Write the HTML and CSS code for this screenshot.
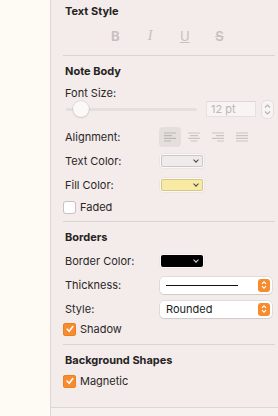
FILE: index.html
```html
<!DOCTYPE html>
<html lang="en">
  <head>
    <meta charset="UTF-8" />
    <meta name="viewport" content="width=device-width, initial-scale=1.0" />
    <title>Inspector</title>
    <link rel="stylesheet" href="styles.css">
  </head>
  <body>
    <div class="canvas"></div>

    <aside class="inspector">
      <!-- Text style -->
      <section class="group top">
        <h2 class="heading">Text Style</h2>
        <div class="style-buttons">
          <span class="sb sb-bold">B</span>
          <span class="sb sb-italic">I</span>
          <span class="sb sb-under">U</span>
          <span class="sb sb-strike">S</span>
        </div>
      </section>
      <hr class="divider first">

      <!-- Note body -->
      <section class="group">
        <h2 class="heading">Note Body</h2>
        <div class="row label-only"><span class="label">Font Size:</span></div>
        <div class="slider-row">
          <div class="track"><span class="thumb"></span></div>
          <div class="field">12 pt</div>
          <div class="stepper">
            <svg width="9" height="13" viewBox="0 0 9 13"><path d="M2 4.5 L4.5 2 L7 4.5 M2 8.5 L4.5 11 L7 8.5" fill="none" stroke="#b9b3b1" stroke-width="1.1"/></svg>
          </div>
        </div>
        <div class="row align-row">
          <span class="label">Alignment:</span>
          <div class="align-group">
            <span class="align-btn selected">
              <svg width="12" height="10" viewBox="0 0 12 10"><path d="M0 1h12M0 3.7h8M0 6.3h12M0 9h7" stroke="#bcb6b4" stroke-width="1.2"/></svg>
            </span>
            <span class="align-btn">
              <svg width="12" height="10" viewBox="0 0 12 10"><path d="M0 1h12M2 3.7h8M0 6.3h12M2.5 9h7" stroke="#c9c3c1" stroke-width="1.2"/></svg>
            </span>
            <span class="align-btn">
              <svg width="12" height="10" viewBox="0 0 12 10"><path d="M0 1h12M4 3.7h8M0 6.3h12M5 9h7" stroke="#c9c3c1" stroke-width="1.2"/></svg>
            </span>
            <span class="align-btn">
              <svg width="12" height="10" viewBox="0 0 12 10"><path d="M0 1h12M0 3.7h12M0 6.3h12M0 9h12" stroke="#c9c3c1" stroke-width="1.2"/></svg>
            </span>
          </div>
        </div>
        <div class="row">
          <span class="label">Text Color:</span>
          <span class="swatch"><span class="swatch-fill light"><i class="chev"></i></span></span>
        </div>
        <div class="row">
          <span class="label">Fill Color:</span>
          <span class="swatch"><span class="swatch-fill yellow"><i class="chev"></i></span></span>
        </div>
        <label class="row check-row">
          <span class="check"></span><span class="label">Faded</span>
        </label>
      </section>
      <hr class="divider">

      <!-- Borders -->
      <section class="group">
        <h2 class="heading">Borders</h2>
        <div class="row">
          <span class="label">Border Color:</span>
          <span class="swatch"><span class="swatch-fill black"><i class="chev light-chev"></i></span></span>
        </div>
        <div class="row">
          <span class="label">Thickness:</span>
          <div class="popup">
            <span class="line-sample"></span>
            <span class="popup-arrows">
              <svg width="8" height="10" viewBox="0 0 8 10"><path d="M2 3.8 L4 1.8 L6 3.8 M2 6.2 L4 8.2 L6 6.2" fill="none" stroke="#fff" stroke-width="1.2"/></svg>
            </span>
          </div>
        </div>
        <div class="row">
          <span class="label">Style:</span>
          <div class="popup">
            <span class="popup-text">Rounded</span>
            <span class="popup-arrows">
              <svg width="8" height="10" viewBox="0 0 8 10"><path d="M2 3.8 L4 1.8 L6 3.8 M2 6.2 L4 8.2 L6 6.2" fill="none" stroke="#fff" stroke-width="1.2"/></svg>
            </span>
          </div>
        </div>
        <label class="row check-row tight">
          <span class="check on">
            <svg width="10" height="10" viewBox="0 0 10 10"><path d="M2.2 5.2 L4.2 7.3 L7.8 2.6" fill="none" stroke="#fff" stroke-width="1.6" stroke-linecap="round" stroke-linejoin="round"/></svg>
          </span><span class="label">Shadow</span>
        </label>
      </section>
      <hr class="divider wide">

      <!-- Background shapes -->
      <section class="group">
        <h2 class="heading">Background Shapes</h2>
        <label class="row check-row snug">
          <span class="check on">
            <svg width="10" height="10" viewBox="0 0 10 10"><path d="M2.2 5.2 L4.2 7.3 L7.8 2.6" fill="none" stroke="#fff" stroke-width="1.6" stroke-linecap="round" stroke-linejoin="round"/></svg>
          </span><span class="label">Magnetic</span>
        </label>
      </section>

      <div class="footer"></div>
    </aside>
  </body>
</html>
```

FILE: styles.css
```css
* {
  box-sizing: border-box;
}

html,
body {
  margin: 0;
  height: 100%;
}

body {
  display: flex;
  font-family: Inter, "Noto Sans", sans-serif;
  font-size: 11px;
  color: #2a2727;
  background: #fefbf4;
}

.canvas {
  width: 50px;
  flex: none;
  background: #fefbf4;
}

.inspector {
  flex: 1;
  display: flex;
  flex-direction: column;
  background: #f3ecea;
  border-left: 1px solid #dcd6d4;
  padding: 0 3px 0 12px;
}

.group {
  display: flex;
  flex-direction: column;
}

.group.top {
  padding-top: 1px;
}

.heading {
  margin: 5px 0 0;
  height: 20px;
  display: flex;
  align-items: center;
  padding-left: 2px;
  font-size: 11px;
  font-weight: 700;
  color: #262323;
}

.group.top .heading {
  margin-top: 0;
}

.style-buttons {
  height: 20px;
  margin-top: 5px;
  display: flex;
  align-items: center;
  padding-left: 35px;
}

.sb {
  width: 34.7px;
  text-align: center;
  font-size: 13px;
  color: #c6c0be;
}

.sb-bold {
  font-weight: 700;
}

.sb-italic {
  font-family: "Liberation Serif", serif;
  font-style: italic;
  font-size: 14px;
}

.sb-under {
  text-decoration: underline;
  text-underline-offset: 1px;
}

.sb-strike {
  text-decoration: line-through;
  font-weight: 600;
}

.divider {
  border: 0;
  border-top: 1px solid #dad4d2;
  margin: 4px 0 0;
  height: 0;
}

.divider.first {
  margin-top: 9px;
}

.divider.wide {
  margin-top: 5px;
}

.row {
  height: 20px;
  margin-top: 4px;
  display: flex;
  align-items: center;
}

.label {
  padding-left: 2px;
  width: 96px;
  flex: none;
}

.label-only {
  margin-top: 2px;
}

.slider-row {
  height: 16px;
  margin-top: -2px;
  display: flex;
  align-items: center;
}

.track {
  position: relative;
  margin-left: 3px;
  width: 131px;
  height: 3px;
  border-radius: 2px;
  background: #e4dedc;
}

.thumb {
  position: absolute;
  left: 7px;
  top: -7px;
  width: 16px;
  height: 16px;
  border-radius: 50%;
  background: #fbf9f8;
  box-shadow: 0 0 0 0.5px rgba(0, 0, 0, 0.12), 0 1px 2px rgba(0, 0, 0, 0.12);
}

.field {
  margin-left: 9px;
  width: 50px;
  height: 16px;
  background: #f8f4f3;
  border: 1px solid #e6e0de;
  border-top-color: #ddd7d5;
  padding-left: 4px;
  line-height: 14px;
  font-size: 11px;
  color: #bcb6b4;
}

.stepper {
  margin-left: 6px;
  width: 11px;
  height: 17px;
  border-radius: 4px;
  background: #f8f4f3;
  box-shadow: 0 0 0 0.5px rgba(0, 0, 0, 0.12);
  display: flex;
  align-items: center;
  justify-content: center;
}

.align-row {
  margin-top: 10px;
}

.align-group {
  display: flex;
  gap: 2px;
}

.align-btn {
  width: 22px;
  height: 20px;
  border-radius: 4px;
  display: flex;
  align-items: center;
  justify-content: center;
}

.align-btn.selected {
  background: #e4dedc;
}

.swatch {
  margin-left: 1px;
  width: 44px;
  height: 14px;
  padding: 1px;
  border-radius: 3px;
  background: #fbf8f7;
  box-shadow: 0 0 0 0.5px rgba(0, 0, 0, 0.06);
}

.swatch-fill {
  position: relative;
  display: block;
  width: 100%;
  height: 100%;
  border-radius: 2px;
  border: 0.5px solid rgba(0, 0, 0, 0.15);
}

.swatch-fill.light {
  background: #efebea;
}

.swatch-fill.yellow {
  background: #f8eaa2;
}

.swatch-fill.black {
  background: #000;
}

.chev {
  position: absolute;
  right: 4px;
  top: 2px;
  width: 4px;
  height: 4px;
  border-right: 1.2px solid #444;
  border-bottom: 1.2px solid #444;
  transform: rotate(45deg);
}

.chev.light-chev {
  border-color: #ddd;
}

.check-row {
  margin-top: 2px;
}

.check-row.tight {
  margin-top: 0;
}

.check-row.snug {
  margin-top: 1px;
}

.check-row .label {
  padding-left: 4px;
  width: auto;
}

.check {
  width: 13px;
  height: 13px;
  flex: none;
  border-radius: 3px;
  background: #fff;
  box-shadow: inset 0 0 0 1px #c9c3c1;
  display: flex;
  align-items: center;
  justify-content: center;
}

.check.on {
  background: #f68c2e;
  box-shadow: inset 0 0 0 0.5px #e0771c;
}

.popup {
  margin-left: 1px;
  width: 112px;
  height: 17px;
  border-radius: 4px;
  background: #fff;
  box-shadow: 0 0 0 0.5px rgba(0, 0, 0, 0.14), 0 1px 1px rgba(0, 0, 0, 0.08);
  display: flex;
  align-items: center;
  justify-content: space-between;
  padding: 0 2px 0 6px;
}

.line-sample {
  width: 72px;
  height: 0;
  border-top: 1px solid #111;
}

.popup-text {
  color: #222;
}

.popup-arrows {
  width: 12px;
  height: 13px;
  border-radius: 3px;
  background: #f68c2e;
  display: flex;
  align-items: center;
  justify-content: center;
}

.footer {
  margin-top: auto;
  height: 9px;
  margin-left: -12px;
  margin-right: -3px;
  border-top: 1px solid #dbd5d3;
  background: #f6f0ee;
}
```
